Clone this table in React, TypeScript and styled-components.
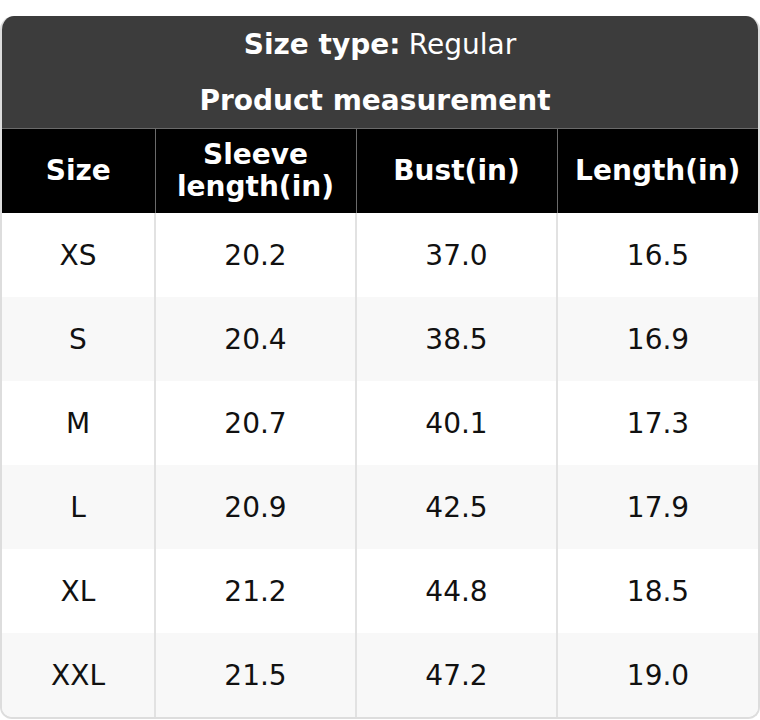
import React from 'react';
import styled, { createGlobalStyle } from 'styled-components';

const GlobalStyle = createGlobalStyle`
  html, body {
    margin: 0;
    padding: 0;
    background: #ffffff;
  }
  body {
    font-family: "DejaVu Sans", "Noto Sans", sans-serif;
  }
`;

const Card = styled.div`
  box-sizing: border-box;
  width: 760px;
  margin-top: 16px;
  border: 2px solid #dddddd;
  border-top: none;
  border-radius: 14px 14px 12px 12px;
  overflow: hidden;
  background: #ffffff;
`;

const Caption = styled.div`
  background: #3c3c3c;
  color: #ffffff;
  border-bottom: 1px solid #6a6a6a;
  margin: 0 -2px;
`;

const CaptionLine = styled.div<{ $bold?: boolean; $shift?: number }>`
  height: 56px;
  display: flex;
  align-items: center;
  justify-content: center;
  font-size: 28px;
  font-weight: ${({ $bold }) => ($bold ? 700 : 400)};
  padding-right: ${({ $shift }) => ($shift ? `${$shift}px` : '0')};
`;

const Strong = styled.strong`
  font-weight: 700;
  margin-right: 0.3em;
`;

const Table = styled.table`
  width: calc(100% + 2px);
  margin-left: -2px;
  border-collapse: collapse;
  table-layout: fixed;
`;

const HeadCell = styled.th`
  height: 84px;
  padding: 0 8px;
  background: #000000;
  color: #ffffff;
  font-size: 28px;
  font-weight: 700;
  line-height: 1.15;
  text-align: center;
  border-left: 1px solid #6a6a6a;
  &:first-child {
    border-left: 2px solid #6a6a6a;
  }
`;

const Row = styled.tr<{ $striped: boolean }>`
  background: ${({ $striped }) => ($striped ? '#f8f8f8' : '#ffffff')};
`;

const Cell = styled.td`
  height: 84px;
  padding: 0;
  color: #111111;
  font-size: 28px;
  text-align: center;
  border-left: 2px solid #e2e2e2;
  &:first-child {
    border-left: 2px solid #dddddd;
  }
`;

const rows = [
  ['XS', '20.2', '37.0', '16.5'],
  ['S', '20.4', '38.5', '16.9'],
  ['M', '20.7', '40.1', '17.3'],
  ['L', '20.9', '42.5', '17.9'],
  ['XL', '21.2', '44.8', '18.5'],
  ['XXL', '21.5', '47.2', '19.0'],
];

const App = () => {
  return (
    <>
      <GlobalStyle />
      <Card>
        <Caption>
          <CaptionLine>
            <Strong>Size type:</Strong> Regular
          </CaptionLine>
          <CaptionLine $bold $shift={10}>
            Product measurement
          </CaptionLine>
        </Caption>
        <Table>
          <colgroup>
            <col style={{ width: 154 }} />
            <col style={{ width: 201 }} />
            <col style={{ width: 201 }} />
            <col />
          </colgroup>
          <thead>
            <tr>
              <HeadCell>Size</HeadCell>
              <HeadCell>
                Sleeve
                <br />
                length(in)
              </HeadCell>
              <HeadCell>Bust(in)</HeadCell>
              <HeadCell>Length(in)</HeadCell>
            </tr>
          </thead>
          <tbody>
            {rows.map((r, i) => (
              <Row key={r[0]} $striped={i % 2 === 1}>
                {r.map((v, j) => (
                  <Cell key={j}>{v}</Cell>
                ))}
              </Row>
            ))}
          </tbody>
        </Table>
      </Card>
    </>
  );
};

export default App;
